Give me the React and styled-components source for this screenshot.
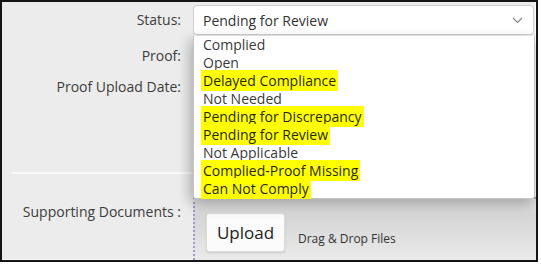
import styled, { createGlobalStyle } from 'styled-components';

const Global = createGlobalStyle`
  html, body { margin: 0; padding: 0; background: #fff; }
  body { font-family: "Open Sans", "Noto Sans", sans-serif; }
  * { box-sizing: border-box; }
`;

const Frame = styled.div`
  position: relative;
  width: 538px;
  height: 262px;
  border: 2px solid #151515;
  background: #ececec;
  box-shadow: inset -1px -1px 0 #fafafa;
  overflow: hidden;
  display: flex;
  flex-direction: column;
  padding-top: 3px;
`;

const Row = styled.div`
  display: grid;
  grid-template-columns: 179px 1fr;
  column-gap: 12px;
  height: ${(p) => p.$h}px;
  padding-top: ${(p) => p.$pt || 0}px;
  flex: ${(p) => (p.$grow ? 1 : 'none')};
`;

const Label = styled.div`
  text-align: right;
  font-size: 14px;
  line-height: 20px;
  color: #3c3c3c;
  font-weight: 500;
  padding-top: ${(p) => p.$pt}px;
`;

const Field = styled.div`
  position: relative;
  padding-right: 2px;
`;

const Select = styled.div`
  height: 30px;
  background: #fff;
  border: 1px solid #cfcfcf;
  border-radius: 4px;
  display: flex;
  align-items: center;
  justify-content: space-between;
  padding: 0 10px 0 9px;
  font-size: 14px;
  color: #333;
`;

const Menu = styled.ul`
  position: absolute;
  top: 31px;
  left: 0;
  width: 342px;
  margin: 0;
  padding: 0;
  list-style: none;
  background: #fff;
  border: 1px solid #c4c4c4;
  border-top: none;
  border-radius: 0 0 3px 3px;
  box-shadow: 0 7px 14px rgba(0, 0, 0, 0.2), -6px 2px 12px rgba(0, 0, 0, 0.12);
  z-index: 5;
`;

const Option = styled.li`
  height: 18px;
  line-height: 18px;
  font-size: 14px;
  color: #333;
  padding-left: 7px;
`;

const Mark = styled.span`
  background: ${(p) => (p.$on ? '#ffff00' : 'transparent')};
  padding: 1px 2px;
  color: ${(p) => (p.$on ? '#2a2a10' : '#3a3a3a')};
`;

const Divider = styled.div`
  height: 2px;
  margin: 0 0 0 10px;
  background: #fafafa;
`;

const DropZone = styled.div`
  height: 100%;
  border-top: 2px dotted #9d9dc6;
  border-left: 2px dotted #9d9dc6;
  background: linear-gradient(#e6e6e6 0, #d6d6d6 30%, #e0e0e0 65%, #ebebeb 100%);
  display: flex;
  align-items: flex-start;
  padding: 14px 0 0 11px;
  gap: 13px;
`;

const UploadButton = styled.button`
  width: 79px;
  height: 39px;
  background: #fbfbfb;
  border: 1px solid #dcdcdc;
  border-radius: 3px;
  box-shadow: 0 1px 2px rgba(0, 0, 0, 0.12);
  font-family: inherit;
  font-size: 17px;
  color: #222;
  padding: 0;
`;

const Hint = styled.span`
  font-size: 12px;
  color: #333;
  margin-top: 17px;
`;

const options = [
  ['Complied', false],
  ['Open', false],
  ['Delayed Compliance', true],
  ['Not Needed', false],
  ['Pending for Discrepancy', true],
  ['Pending for Review', true],
  ['Not Applicable', false],
  ['Complied-Proof Missing', true],
  ['Can Not Comply', true],
];

export default function App() {
  return (
    <>
      <Global />
      <Frame>
        <Row $h={30}>
          <Label $pt={5}>Status:</Label>
          <Field>
            <Select>
              <span>Pending for Review</span>
              <svg width="11" height="7" viewBox="0 0 11 7">
                <path d="M1 1l4.5 4.5L10 1" fill="none" stroke="#888" strokeWidth="1.2" />
              </svg>
            </Select>
            <Menu>
              {options.map(([o, on]) => (
                <Option key={o}>
                  <Mark $on={on}>{o}</Mark>
                </Option>
              ))}
            </Menu>
          </Field>
        </Row>
        <Row $h={37}>
          <Label $pt={11}>Proof:</Label>
          <Field />
        </Row>
        <Row $h={100}>
          <Label $pt={5}>Proof Upload Date:</Label>
          <Field />
        </Row>
        <Divider />
        <Row $grow $pt={23}>
          <Label $pt={5}>Supporting Documents :</Label>
          <DropZone>
            <UploadButton>Upload</UploadButton>
            <Hint>Drag &amp; Drop Files</Hint>
          </DropZone>
        </Row>
      </Frame>
    </>
  );
}
